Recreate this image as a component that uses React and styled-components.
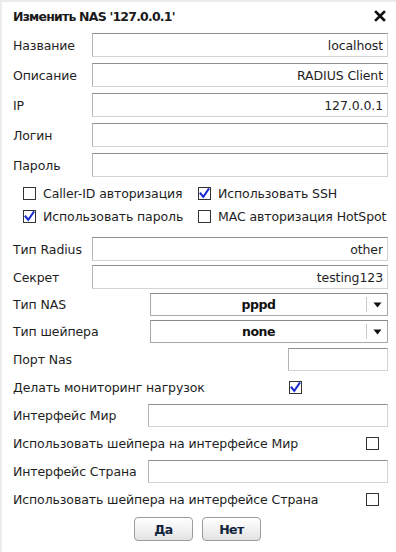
import React from "react";
import styled, { createGlobalStyle } from "styled-components";

const Global = createGlobalStyle`
  html, body { margin: 0; padding: 0; background: #fff; }
  body { font-family: "DejaVu Sans", Verdana, sans-serif; font-size: 12.5px; letter-spacing: -0.1px; color: #1e1e1e; }
`;

const Dialog = styled.div`
  width: 396px;
  height: 552px;
  box-sizing: border-box;
  border-left: 2px solid #ececec;
  border-top: 2px solid #ececec;
  padding: 0 8px 0 11px;
  display: flex;
  flex-direction: column;
`;

const Header = styled.div`
  height: 28px;
  display: flex;
  align-items: center;
  justify-content: space-between;
`;

const Title = styled.div`
  font-weight: bold;
  font-size: 12.5px;
  letter-spacing: -0.8px;
  color: #1a1a1a;
`;

const Close = styled.button`
  border: 0;
  background: none;
  padding: 0;
  margin-right: 2px;
  width: 12px;
  height: 12px;
  display: flex;
`;

const Row = styled.div`
  height: ${(p) => p.$h || 28}px;
  display: flex;
  align-items: center;
`;

const Label = styled.div`
  width: ${(p) => p.$w}px;
  flex: none;
  white-space: nowrap;
`;

const Input = styled.input`
  box-sizing: border-box;
  width: ${(p) => p.$w}px;
  height: ${(p) => p.$h || 24}px;
  border: 1px solid #d4d4d4;
  border-top-color: #8e8e8e;
  border-left-color: #b4b4b4;
  background: #fff;
  font-family: inherit;
  font-size: 12.5px;
  letter-spacing: -0.1px;
  color: #1e1e1e;
  text-align: right;
  padding: 0 4px;
  outline: none;
`;

const Select = styled.div`
  box-sizing: border-box;
  width: 238px;
  height: 23px;
  border: 1px solid #a8a8a8;
  border-top-color: #8a8a8a;
  display: flex;
  align-items: center;
  background: #fff;
`;

const SelectValue = styled.div`
  flex: 1;
  text-align: center;
  font-weight: bold;
  letter-spacing: -0.5px;
  color: #111;
`;

const SelectArrow = styled.div`
  width: 20px;
  height: 15px;
  border-left: 1px solid #c8c8c8;
  display: flex;
  align-items: center;
  justify-content: center;
`;

const CheckGrid = styled.div`
  padding: 2px 0 7px 10px;
  display: grid;
  grid-template-columns: 175px 1fr;
  grid-auto-rows: 23px;
`;

const CheckItem = styled.label`
  display: flex;
  align-items: center;
  gap: 7px;
  white-space: nowrap;
`;

const Box = styled.span`
  box-sizing: border-box;
  width: 13px;
  height: 13px;
  flex: none;
  border: 1px solid #333;
  background: #fff;
  display: inline-flex;
  align-items: center;
  justify-content: center;
`;

const Buttons = styled.div`
  margin-top: 4px;
  display: flex;
  justify-content: center;
  gap: 9px;
  padding-right: 6px;
`;

const Button = styled.button`
  width: 59px;
  height: 24px;
  border: 1px solid #9c9c9c;
  border-radius: 4px;
  background: linear-gradient(#ffffff, #f2f2f2 50%, #e2e2e2);
  font-family: inherit;
  font-size: 12.5px;
  font-weight: bold;
  letter-spacing: -0.5px;
  color: #12233c;
  padding: 0;
`;

function Check({ checked }) {
  return (
    <Box>
      {checked && (
        <svg width="11" height="11" viewBox="0 0 11 11">
          <path d="M1.5 5.5 L4.3 8.8 L9.5 1.2" fill="none" stroke="#1a2bd0" strokeWidth="2" strokeLinecap="square" />
        </svg>
      )}
    </Box>
  );
}

function Arrow() {
  return (
    <svg width="9" height="6" viewBox="0 0 9 6">
      <path d="M0.5 0.5 H8.5 L4.5 5.5 Z" fill="#111" />
    </svg>
  );
}

export default function App() {
  return (
    <>
      <Global />
      <Dialog>
        <Header>
          <Title>Изменить NAS '127.0.0.1'</Title>
          <Close aria-label="close">
            <svg width="12" height="12" viewBox="0 0 12 12">
              <path d="M2 2 L10 10 M10 2 L2 10" stroke="#111" strokeWidth="2.6" strokeLinecap="square" />
            </svg>
          </Close>
        </Header>

        <Row $h={30}><Label $w={79}>Название</Label><Input $w={296} defaultValue="localhost" /></Row>
        <Row $h={30}><Label $w={79}>Описание</Label><Input $w={296} defaultValue="RADIUS Client" /></Row>
        <Row $h={30}><Label $w={79}>IP</Label><Input $w={296} defaultValue="127.0.0.1" /></Row>
        <Row $h={30}><Label $w={79}>Логин</Label><Input $w={296} defaultValue="" /></Row>
        <Row $h={30}><Label $w={79}>Пароль</Label><Input $w={296} defaultValue="" /></Row>

        <CheckGrid>
          <CheckItem><Check />Caller-ID авторизация</CheckItem>
          <CheckItem><Check checked />Использовать SSH</CheckItem>
          <CheckItem><Check checked />Использовать пароль</CheckItem>
          <CheckItem><Check />MAC авторизация HotSpot</CheckItem>
        </CheckGrid>

        <Row><Label $w={79}>Тип Radius</Label><Input $w={296} defaultValue="other" /></Row>
        <Row><Label $w={79}>Секрет</Label><Input $w={296} defaultValue="testing123" /></Row>
        <Row $h={27}>
          <Label $w={137}>Тип NAS</Label>
          <Select><SelectValue>pppd</SelectValue><SelectArrow><Arrow /></SelectArrow></Select>
        </Row>
        <Row $h={27}>
          <Label $w={137}>Тип шейпера</Label>
          <Select><SelectValue>none</SelectValue><SelectArrow><Arrow /></SelectArrow></Select>
        </Row>

        <Row><Label $w={275}>Порт Nas</Label><Input $w={100} $h={23} defaultValue="" /></Row>
        <Row><Label $w={276}>Делать мониторинг нагрузок</Label><Check checked /></Row>
        <Row><Label $w={135}>Интерфейс Мир</Label><Input $w={240} $h={23} defaultValue="" /></Row>
        <Row><Label $w={353}>Использовать шейпера на интерфейсе Мир</Label><Check /></Row>
        <Row><Label $w={135}>Интерфейс Страна</Label><Input $w={240} $h={23} defaultValue="" /></Row>
        <Row><Label $w={353}>Использовать шейпера на интерфейсе Страна</Label><Check /></Row>

        <Buttons>
          <Button>Да</Button>
          <Button>Нет</Button>
        </Buttons>
      </Dialog>
    </>
  );
}
